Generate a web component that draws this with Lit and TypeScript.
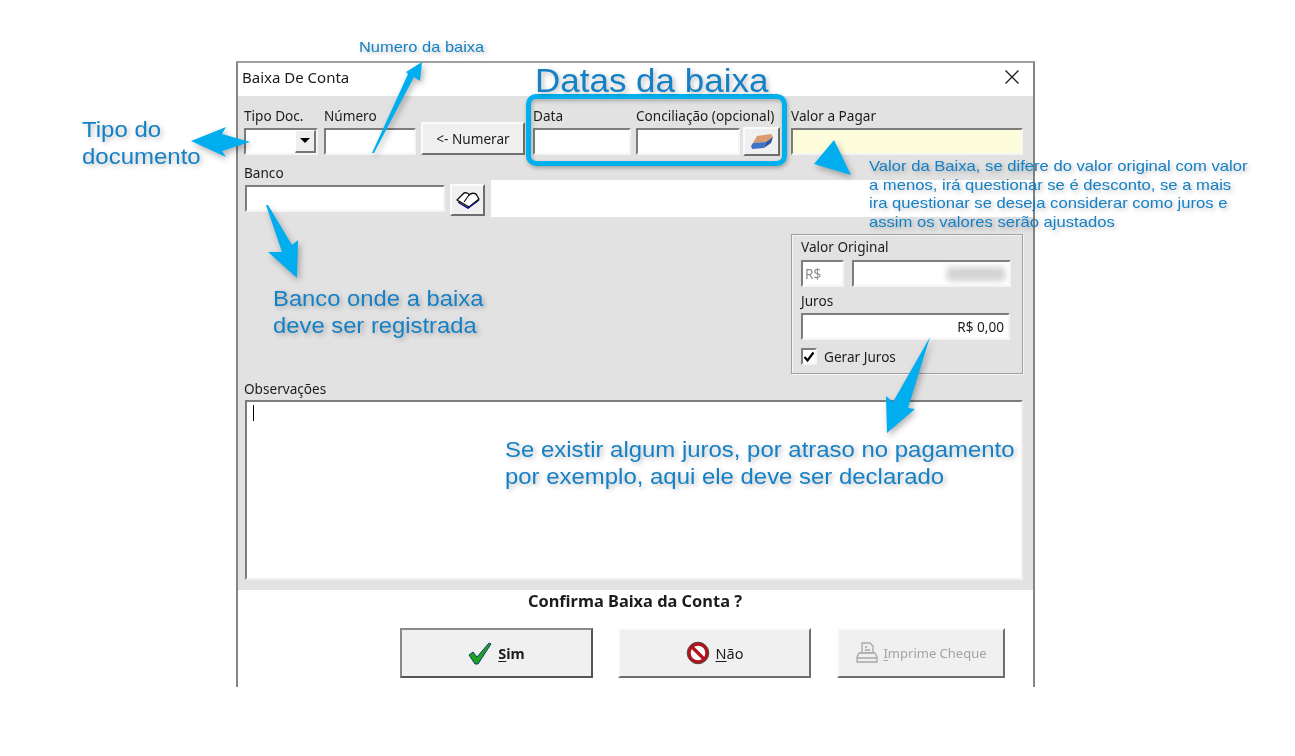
import { LitElement, html, css, svg } from "lit";
import { customElement } from "lit/decorators.js";

@customElement("app-root")
export class AppRoot extends LitElement {
  static styles = css`
    :host { display: block; width: 1295px; height: 756px; position: relative; overflow: hidden; background: #fff;
      font-family: "Noto Sans", "DejaVu Sans", sans-serif; font-size: 13.6px; color: #1c1c1c; }
    .page { padding: 61px 0 0 236px; }
    .dialog { width: 799px; height: 626px; box-sizing: border-box; border: 2px solid #858585; border-top-color: #a0a0a0; border-bottom: 0; display: flex; flex-direction: column; background: #fff; filter: blur(0.35px); }
    .title { height: 33px; box-sizing: border-box; flex: none; display: flex; align-items: center; justify-content: space-between; padding: 0 13px 5px 4px; font-size: 15px; }
    .title svg { display: block; }
    .body { height: 494px; flex: none; background: #e2e2e2; padding-top: 10px; box-sizing: border-box; }
    .row1 { display: flex; align-items: flex-end; padding-left: 6px; height: 49px; }
    .field { display: flex; flex-direction: column; }
    .field label { height: 22px; line-height: 20px; white-space: nowrap; }
    .input { box-sizing: border-box; height: 27px; background: #fff; border: 2px solid; border-color: #7d7d7d #f5f5f5 #f5f5f5 #7d7d7d; display: flex; align-items: center; }
    .w-tipo { width: 74px; }
    .w-num { width: 92px; margin-left: 6px; }
    .w-data { width: 98px; margin-left: 8px; }
    .w-conc { width: 104px; margin-left: 5px; }
    .w-conc label { width: 140px; }
    .w-valor { width: 232px; margin-left: 11px; }
    .yellow { background: #fdfddc; }
    .tipo { justify-content: flex-end; padding: 0 0 1px 0; }
    .drop { width: 21px; height: 23px; background: #efefef; border: 1px solid; border-color: #fff #777 #777 #fff; border-width: 1px 2px 2px 1px; display: flex; align-items: center; justify-content: center; box-sizing: border-box; }
    .drop i { width: 0; height: 0; border: 5px solid transparent; border-top: 5px solid #000; border-bottom: 0; }
    .btn { box-sizing: border-box; background: #f0f0f0; border: 2px solid; border-color: #fbfbfb #6e6e6e #6e6e6e #fbfbfb; display: flex; align-items: center; justify-content: center; gap: 6px; }
    .numerar { width: 104px; height: 33px; margin-left: 5px; }
    .eraser { width: 37px; height: 29px; margin: 0 0 -1px 3px; }
    .row2 { display: flex; align-items: flex-end; padding-left: 7px; margin-top: 11px; height: 51px; }
    .w-banco { width: 200px; padding-bottom: 5px; }
    .w-banco label { margin-left: -1px; }
    .book { width: 35px; height: 32px; margin: 0 0 1px 5px; }
    .panel { flex: 1; height: 37px; margin-left: 6px; background: #fff; }
    .group-row { display: flex; justify-content: flex-end; padding-right: 10px; margin-top: 17px; }
    .group { box-sizing: border-box; width: 232px; height: 140px; border: 1px solid #a0a0a0; box-shadow: inset 1px 1px 0 #f5f5f5, 1px 1px 0 #f5f5f5; padding: 2px 0 0 9px; display: flex; flex-direction: column; }
    .group label { height: 23px; line-height: 20px; }
    .group .l2 { height: 26px; line-height: 27px; }
    .pair { display: flex; gap: 8px; }
    .rs { width: 43px; color: #8c8c8c; padding-left: 2px; }
    .orig { width: 159px; justify-content: flex-end; padding-right: 4px; }
    .smudge { width: 58px; height: 14px; background: #d2d2d2; filter: blur(3px); }
    .juros { width: 209px; justify-content: flex-end; padding-right: 4px; }
    .check { display: flex; align-items: center; gap: 7px; margin-top: 7px; }
    .box { width: 16px; height: 17px; box-sizing: border-box; background: #fff; border: 2px solid; border-color: #7d7d7d #f5f5f5 #f5f5f5 #7d7d7d; display: flex; align-items: center; justify-content: center; }
    .obs { padding: 6px 10px 0 7px; }
    .obs label { display: block; height: 20px; line-height: 18px; margin-left: -1px; }
    .area { height: 180px; box-sizing: border-box; background: #fff; border: 2px solid; border-color: #7d7d7d #f0f0f0 #f0f0f0 #7d7d7d; padding: 3px 0 0 6px; }
    .caret { width: 1px; height: 16px; background: #000; }
    .footer { flex: 1; display: flex; flex-direction: column; }
    .confirm { height: 22px; text-align: center; font-weight: 700; font-size: 16.4px; line-height: 22px; padding-right: 1px; }
    .actions { display: flex; padding: 16px 0 0 162px; }
    .action { height: 50px; font-size: 14.5px; }
    .sim { width: 193px; border-color: #8a8a8a #555 #555 #8a8a8a; font-weight: 700; }
    .nao { width: 193px; margin-left: 25px; }
    .imp { width: 168px; margin-left: 26px; color: #a3a3a3; font-size: 13px; gap: 4px; }
    u { text-underline-offset: 2px; }
    .overlay { position: absolute; left: 0; top: 0; filter: drop-shadow(2px 3px 3px rgba(0,0,0,.3)); }
    .note { position: absolute; margin: 0; font-family: "Liberation Sans", Arial, sans-serif; color: #1480c6; text-shadow: 2px 2px 5px rgba(0,0,0,.28); white-space: nowrap; filter: blur(0.3px); transform-origin: left top; }
    .n-num { left: 359px; top: 38px; font-size: 15px; line-height: 18px; transform: scaleX(1.096); }
    .n-datas { left: 535px; top: 62px; font-size: 33px; line-height: 38px; transform: scaleX(1.06); }
    .n-tipo { left: 82px; top: 117px; font-size: 22px; line-height: 26.5px; transform: scaleX(1.09); }
    .n-banco { left: 273px; top: 285px; font-size: 22px; line-height: 27px; transform: scaleX(1.082); }
    .n-valor { left: 869px; top: 157px; font-size: 15px; line-height: 18.7px; transform: scaleX(1.108); }
    .n-juros { left: 505px; top: 436px; font-size: 22px; line-height: 27px; transform: scaleX(1.088); }
    .hl { position: absolute; left: 526px; top: 94px; width: 261px; height: 72px; box-sizing: border-box; border: 5px solid #00b0ec; border-radius: 10px; box-shadow: 1px 2px 4px rgba(0,0,0,.3), inset 1px 2px 4px rgba(0,0,0,.25); }
  `;

  private field(cls: string, label: string, inner: unknown = html`<div class="input"></div>`) {
    return html`<div class="field ${cls}"><label>${label}</label>${inner}</div>`;
  }

  render() {
    const arrows = [
      "191,141 226,127 222,134 250,142 222,151 226,157",
      "422,62 420,81 414,77 374,153 372,153 408,74 406,72",
      "834,140 814,164 851,175",
      "266,205 268,205 292,245 298,240 297,278 268,252 282,252",
      "930,337 908,408 915,409 887,433 886,396 893,402",
    ];
    return html`
      <div class="page">
        <div class="dialog">
          <div class="title">
            <span>Baixa De Conta</span>
            <svg width="16" height="16" viewBox="0 0 16 16"><path d="M1.5 1.5 14.5 14.5M14.5 1.5 1.5 14.5" stroke="#222" stroke-width="1.4" fill="none"/></svg>
          </div>
          <div class="body">
            <div class="row1">
              ${this.field("w-tipo", "Tipo Doc.", html`<div class="input tipo"><div class="drop"><i></i></div></div>`)}
              ${this.field("w-num", "Número")}
              <div class="btn numerar">&lt;- Numerar</div>
              ${this.field("w-data", "Data")}
              ${this.field("w-conc", "Conciliação (opcional)")}
              <div class="btn eraser">
                <svg width="24" height="18" viewBox="0 0 24 18"><path d="M7 3 21 1 23 4 16 9 3 10Z" fill="#dc9a6e"/><path d="M3 10 16 9 14 15 2 16 1 13Z" fill="#3f73c9"/><path d="M16 9 23 4 21 10 14 15Z" fill="#2a559c"/></svg>
              </div>
              ${this.field("w-valor", "Valor a Pagar", html`<div class="input yellow"></div>`)}
            </div>
            <div class="row2">
              ${this.field("w-banco", "Banco")}
              <div class="btn book">
                <svg width="24" height="18" viewBox="0 0 24 18"><path d="M1 9 8 2C11 1 13 3 13 4 15 2 18 2 20 3L23 8 13 16Z" fill="#fff" stroke="#111" stroke-width="1.4" stroke-linejoin="round"/><path d="M13 4 8 11M2 11 12 17 23 9" stroke="#111" fill="none" stroke-width="1.2"/><path d="M3 12 12 17.5 22 10" stroke="#1a1ad0" fill="none" stroke-width="1"/></svg>
              </div>
              <div class="panel"></div>
            </div>
            <div class="group-row">
              <div class="group">
                <label>Valor Original</label>
                <div class="pair">
                  <div class="input rs">R$</div>
                  <div class="input orig"><div class="smudge"></div></div>
                </div>
                <label class="l2">Juros</label>
                <div class="input juros">R$ 0,00</div>
                <div class="check">
                  <div class="box"><svg width="12" height="12" viewBox="0 0 12 12"><path d="M1.5 6 4.5 9.5 10.5 1.5" stroke="#000" stroke-width="2.2" fill="none"/></svg></div>
                  <span>Gerar Juros</span>
                </div>
              </div>
            </div>
            <div class="obs">
              <label>Observações</label>
              <div class="area"><div class="caret"></div></div>
            </div>
          </div>
          <div class="footer">
            <div class="confirm">Confirma Baixa da Conta ?</div>
            <div class="actions">
              <div class="btn action sim">
                <svg width="24" height="24" viewBox="0 0 24 24"><path d="M1 14 5 11 9 16 21 2 23 3 10 23 7 23Z" fill="#1fa31f" stroke="#123a7a" stroke-width="1"/></svg>
                <span><u>S</u>im</span>
              </div>
              <div class="btn action nao">
                <svg width="24" height="24" viewBox="0 0 24 24"><circle cx="12" cy="12" r="9" fill="#fff" stroke="#b0141c" stroke-width="3.4"/><path d="M6 6 18 18" stroke="#b0141c" stroke-width="3.4"/><circle cx="12" cy="12" r="10.8" fill="none" stroke="#333" stroke-width=".8"/></svg>
                <span><u>N</u>ão</span>
              </div>
              <div class="btn action imp">
                <svg width="24" height="24" viewBox="0 0 24 24" fill="#eee" stroke="#a8a8a8" stroke-width="1.3"><path d="M7 2H15L18 5V12H7Z"/><path d="M4 12H20L22 16V21H2V16Z"/><path d="M2 17H22M10 6H12M10 9H15"/></svg>
                <span><u>I</u>mprime Cheque</span>
              </div>
            </div>
          </div>
        </div>
      </div>

      <div class="hl"></div>
      <svg class="overlay" width="1295" height="756" viewBox="0 0 1295 756">
        ${arrows.map((p) => svg`<polygon points=${p} fill="#00aeef"/>`)}
      </svg>
      <p class="note n-num">Numero da baixa</p>
      <p class="note n-datas">Datas da baixa</p>
      <p class="note n-tipo">Tipo do<br />documento</p>
      <p class="note n-banco">Banco onde a baixa<br />deve ser registrada</p>
      <p class="note n-valor">Valor da Baixa, se difere do valor original com valor<br />a menos, irá questionar se é desconto, se a mais<br />ira questionar se deseja considerar como juros e<br />assim os valores serão ajustados</p>
      <p class="note n-juros">Se existir algum juros, por atraso no pagamento<br />por exemplo, aqui ele deve ser declarado</p>
    `;
  }
}
